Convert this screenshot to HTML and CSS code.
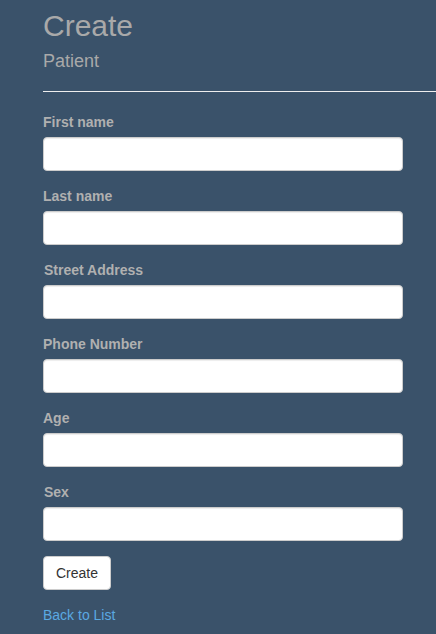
FILE: index.html
```html
<!DOCTYPE html>
<html>
<head>
<meta charset="utf-8">
<link rel="stylesheet" href="styles.css">
</head>
<body>
<div class="page">
  <h2 class="title">Create</h2>
  <h4 class="subtitle">Patient</h4>
  <hr class="rule">
  <form class="form">
    <div class="group">
      <label class="label">First name</label>
      <input class="input" type="text">
    </div>
    <div class="group">
      <label class="label">Last name</label>
      <input class="input" type="text">
    </div>
    <div class="group">
      <label class="label label-in">Street Address</label>
      <input class="input" type="text">
    </div>
    <div class="group">
      <label class="label">Phone Number</label>
      <input class="input" type="text">
    </div>
    <div class="group">
      <label class="label">Age</label>
      <input class="input" type="text">
    </div>
    <div class="group">
      <label class="label label-in">Sex</label>
      <input class="input" type="text">
    </div>
    <div class="group">
      <button class="btn" type="button">Create</button>
    </div>
  </form>
  <div class="back"><a class="link" href="#">Back to List</a></div>
</div>
</body>
</html>
```
FILE: styles.css
```css
html, body {
  margin: 0;
  padding: 0;
  background: #3a526a;
  height: 100%;
  overflow: hidden;
}
body {
  font-family: "Liberation Sans", Arial, sans-serif;
  font-size: 14px;
  line-height: 20px;
  color: #aaaaaa;
}
.page {
  padding-left: 43px;
}
.title {
  margin: 0;
  padding-top: 9px;
  font-size: 30px;
  line-height: 33px;
  font-weight: 500;
  color: #a9a9a9;
}
.subtitle {
  margin: 9px 0 0;
  font-size: 18px;
  line-height: 20px;
  font-weight: 500;
  color: #a9a9a9;
}
.rule {
  margin: 20px 0 0;
  border: 0;
  border-top: 1px solid #eeeeee;
  height: 0;
}
.form {
  margin: 0;
  padding-top: 20px;
}
.group {
  margin-bottom: 15px;
  display: flex;
  flex-direction: column;
  align-items: flex-start;
}
.label {
  display: block;
  font-weight: bold;
  margin-bottom: 5px;
  color: #b0b0b0;
}
.label-in {
  padding-left: 1px;
}
.input {
  box-sizing: border-box;
  width: 360px;
  height: 34px;
  margin: 0;
  padding: 6px 12px;
  background: #ffffff;
  border: 1px solid #cccccc;
  border-radius: 4px;
  box-shadow: inset 0 1px 1px rgba(0,0,0,0.075);
  font-family: inherit;
  font-size: 14px;
}
.btn {
  box-sizing: border-box;
  height: 34px;
  padding: 6px 12px;
  background: #ffffff;
  border: 1px solid #cccccc;
  border-radius: 4px;
  font-family: "Liberation Sans", Arial, sans-serif;
  font-size: 14px;
  line-height: 20px;
  color: #333333;
}
.back {
  margin-top: 0;
}
.link {
  color: #5aa9e2;
  text-decoration: none;
}
```
